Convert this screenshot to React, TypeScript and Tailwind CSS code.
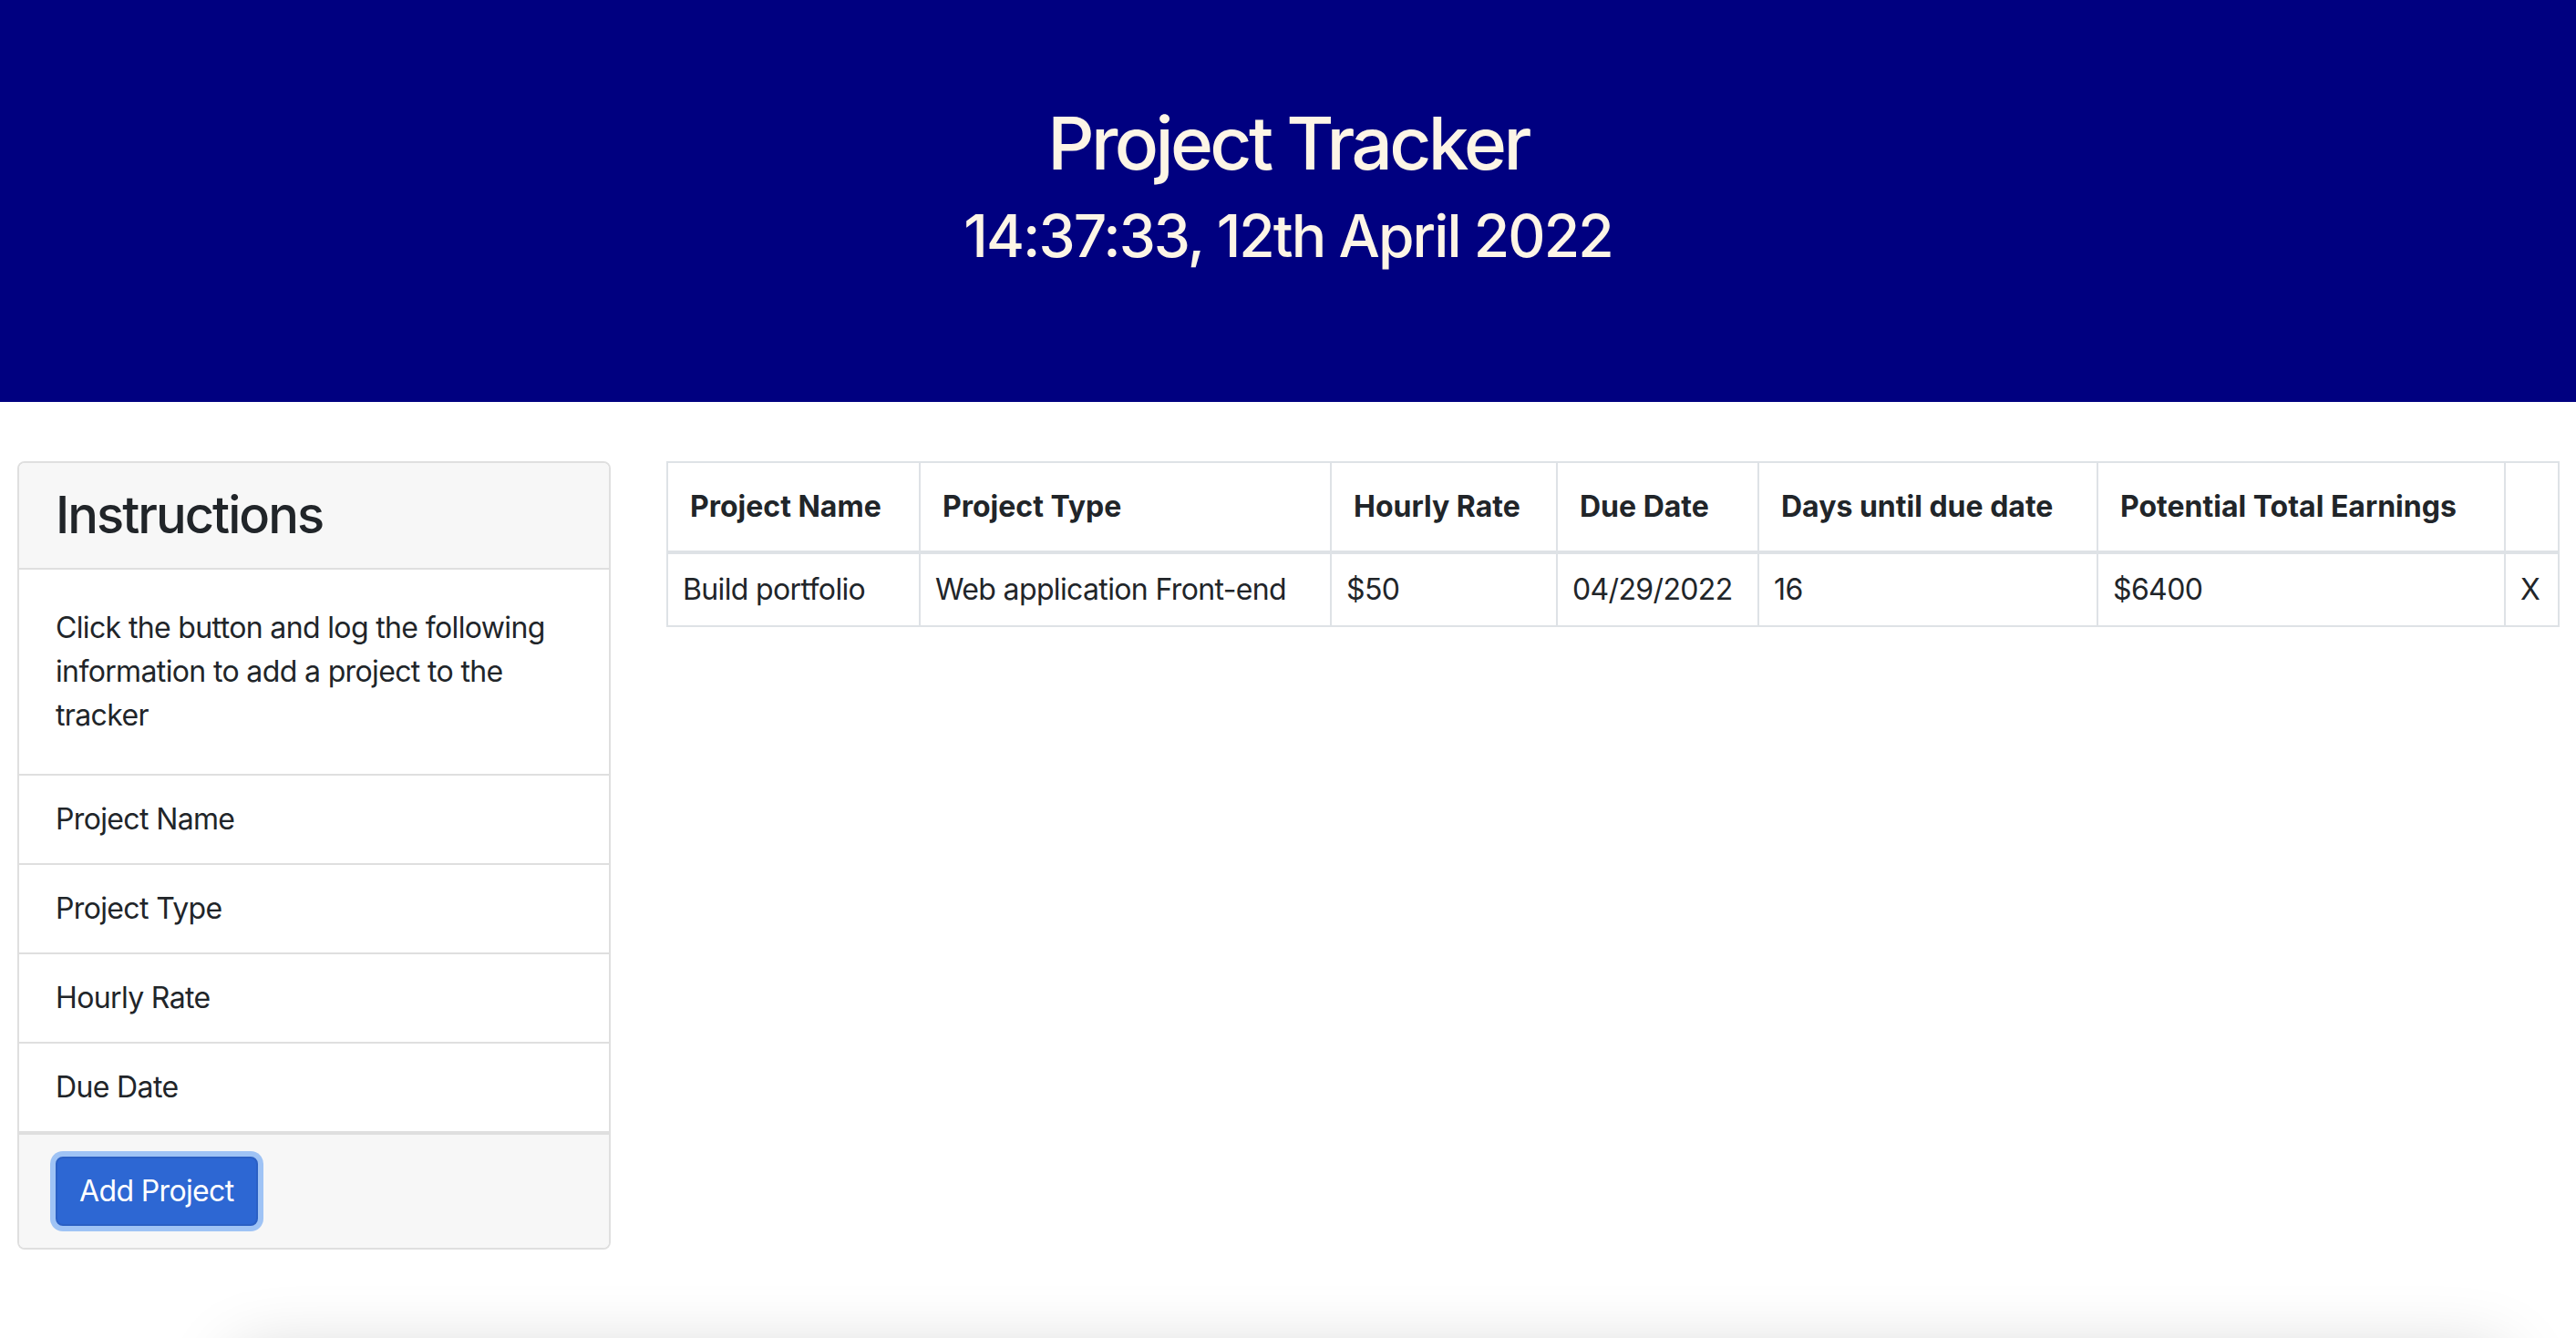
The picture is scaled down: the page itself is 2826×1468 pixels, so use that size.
// Project tracker page
const headers = [
  { label: 'Project Name', w: 'w-[277px]' },
  { label: 'Project Type', w: 'w-[451px]' },
  { label: 'Hourly Rate', w: 'w-[248px]' },
  { label: 'Due Date', w: 'w-[221px]' },
  { label: 'Days until due date', w: 'w-[372px]' },
  { label: 'Potential Total Earnings', w: 'w-[447px]' },
  { label: '', w: 'w-[59px]' },
]

const row = ['Build portfolio', 'Web application Front-end', '$50', '04/29/2022', '16', '$6400', 'X']

const fields = ['Project Name', 'Project Type', 'Hourly Rate', 'Due Date']

function Header() {
  return (
    <header className="h-[441px] bg-[#000080] pt-[109px] flex flex-col items-center text-[#fdf5e6]">
      <h1 className="text-[80px] leading-[96px] font-medium tracking-[-0.045em] mb-[15px]">Project Tracker</h1>
      <h2 className="text-[64px] leading-[77px] font-medium tracking-[-0.03em]">14:37:33, 12th April 2022</h2>
    </header>
  )
}

function Instructions() {
  return (
    <div className="w-[651px] shrink-0 border-2 border-[#dfdfdf] rounded-[8px] overflow-hidden">
      <div className="bg-[#f7f7f7] border-b-2 border-[#dfdfdf] px-[40px] py-[24px]">
        <h3 className="text-[56px] leading-[67px] font-medium tracking-[-0.035em]">Instructions</h3>
      </div>
      <div className="p-[40px] border-b-2 border-[#dfdfdf]">
        <p>Click the button and log the following information to add a project to the tracker</p>
      </div>
      {fields.map((f) => (
        <div key={f} className="px-[40px] py-[24px] border-b-2 border-[#dfdfdf]">
          {f}
        </div>
      ))}
      <div className="bg-[#f7f7f7] border-t-2 border-[#dfdfdf] px-[40px] pt-[24px] pb-[24px]">
        <button className="bg-[#2d67d3] text-white px-[24px] py-[12px] border-2 border-[#2a5fc4] rounded-[8px] shadow-[0_0_0_6px_#9fc3f5] leading-[48px]">
          Add Project
        </button>
      </div>
    </div>
  )
}

function ProjectTable() {
  return (
    <table className="w-[2075px] border-collapse border-2 border-[#dee2e6] table-fixed self-start">
      <thead>
        <tr>
          {headers.map((h, i) => (
            <th
              key={i}
              className={`${h.w} border-2 border-b-4 border-[#dee2e6] px-[24px] py-[24px] text-left font-bold tracking-normal leading-[48px]`}
            >
              {h.label}
            </th>
          ))}
        </tr>
      </thead>
      <tbody>
        <tr>
          {row.map((c, i) => (
            <td key={i} className="border-2 border-[#dee2e6] px-[16px] py-[15px] leading-[48px]">
              {c}
            </td>
          ))}
        </tr>
      </tbody>
    </table>
  )
}

export default function App() {
  return (
    <div className="min-h-[1468px] bg-white text-[#212529] text-[32px] leading-[48px] tracking-[-0.02em] font-['Inter','Liberation_Sans',sans-serif]">
      <Header />
      <main className="flex gap-[61px] pl-[19px] pt-[65px]">
        <Instructions />
        <ProjectTable />
      </main>
      {/* footer shadow peeking in from below */}
      <div className="fixed left-[260px] right-[80px] top-[1488px] h-[120px] bg-white shadow-[0_0_80px_rgba(0,0,0,0.2)]" />
    </div>
  )
}
